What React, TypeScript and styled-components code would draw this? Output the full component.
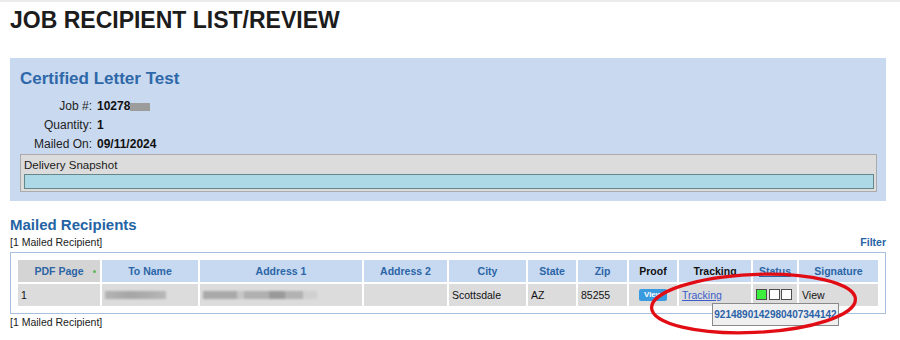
import React from 'react'
import styled, { createGlobalStyle } from 'styled-components'

const GlobalStyle = createGlobalStyle`
  html, body {
    margin: 0;
    padding: 0;
    background: #fff;
  }
  body {
    font-family: "Liberation Sans", Arial, Helvetica, sans-serif;
    color: #111;
  }
`

// page frame
const Page = styled.div`
  position: relative;
  width: 900px;
  height: 340px;
  overflow: hidden;
  box-sizing: border-box;
  border-top: 2px solid #ebebeb;
  padding: 4px 14px 0 10px;
`

const Title = styled.h1`
  margin: 0 0 24px;
  font-size: 23px;
  line-height: 28px;
  font-weight: bold;
  color: #1c1c1c;
`

// job summary panel
const Panel = styled.section`
  background: #c9d9ef;
  padding: 11px 9px 9px 10px;
`

const PanelTitle = styled.h2`
  margin: 0 0 8px;
  font-size: 17px;
  line-height: 20px;
  font-weight: bold;
  color: #2e68a9;
`

const InfoGrid = styled.div`
  display: grid;
  grid-template-columns: 72px auto;
  grid-auto-rows: 17.5px;
  column-gap: 5px;
  row-gap: 1.5px;
  align-items: center;
  font-size: 12px;
`

const InfoLabel = styled.div`
  text-align: right;
  color: #222;
`

const InfoValue = styled.div`
  display: flex;
  align-items: center;
  font-weight: bold;
  color: #111;
`

const Redacted = styled.span<{ $w: number; $h: number }>`
  display: inline-block;
  width: ${p => p.$w}px;
  height: ${p => p.$h}px;
  background: #9c9c9c;
  margin-top: 3px;
  filter: blur(0.4px);
`

const SnapshotBox = styled.div`
  margin-top: 1px;
  border: 1px solid #ababab;
  background: #dcdcdc;
  padding: 2px 2px 2px 3px;
`

const SnapshotLabel = styled.div`
  font-size: 11.5px;
  line-height: 17px;
  color: #1a1a1a;
`

const SnapshotBar = styled.div`
  height: 13px;
  border: 1px solid #66878a;
  background: #add8e6;
`

// recipients section
const SectionTitle = styled.h2`
  margin: 15px 0 0;
  font-size: 15px;
  line-height: 18px;
  font-weight: bold;
  color: #2463a4;
`

const CountRow = styled.div`
  display: flex;
  justify-content: space-between;
  align-items: baseline;
  margin-top: 2px;
  font-size: 10.5px;
  line-height: 13px;
  color: #1a1a1a;
`

const FilterLink = styled.span`
  font-weight: bold;
  color: #2463a4;
  font-size: 10.5px;
`

const TableBox = styled.div`
  margin-top: 3px;
  border: 1px solid #a9bfde;
  padding: 5px;
`

const Table = styled.table`
  width: 100%;
  table-layout: fixed;
  border-collapse: separate;
  border-spacing: 2px;
  font-size: 10.5px;
`

const Col = styled.col<{ $w: number }>`
  width: ${p => p.$w}px;
`

const HeadCell = styled.th<{ $tone?: 'gray'; $color?: 'dark' | 'link' }>`
  position: relative;
  height: 22px;
  padding: 0 3px;
  background: ${p => (p.$tone === 'gray' ? '#d4d4d4' : '#c6d9f1')};
  color: ${p => (p.$color === 'dark' ? '#111' : '#2c65a6')};
  text-decoration: ${p => (p.$color === 'link' ? 'underline' : 'none')};
  font-weight: bold;
  text-align: center;
  white-space: nowrap;
`

const SortDot = styled.span`
  position: absolute;
  right: 4px;
  top: 10px;
  width: 3px;
  height: 3px;
  border-radius: 50%;
  background: #62b85a;
`

const Cell = styled.td`
  position: relative;
  height: 22px;
  padding: 0 3px;
  background: #dcdcdc;
  color: #111;
  white-space: nowrap;
`

const Blur = styled.div<{ $w: number; $bg: string }>`
  width: ${p => p.$w}px;
  height: 8px;
  background: ${p => p.$bg};
  filter: blur(1.2px);
`

const ViewButton = styled.span`
  display: block;
  margin: 0 auto;
  width: 28px;
  height: 12px;
  border-radius: 2px;
  background: #3a9ae0;
  color: #fff;
  font-size: 8px;
  font-weight: bold;
  line-height: 12px;
  text-align: center;
`

const TrackingLink = styled.a`
  color: #3b5cc9;
  text-decoration: underline;
`

const StatusBoxes = styled.div`
  display: flex;
  gap: 1.5px;
`

const StatusBox = styled.span<{ $on?: boolean }>`
  width: 9px;
  height: 9px;
  border: 1px solid #4d4d4d;
  background: ${p => (p.$on ? '#3ef03e' : '#fff')};
`

const Tooltip = styled.div`
  position: absolute;
  left: 33px;
  top: 19px;
  z-index: 2;
  box-sizing: border-box;
  width: 127px;
  height: 23px;
  display: flex;
  align-items: center;
  justify-content: center;
  background: #efefef;
  border: 1px solid #8a8a8a;
  color: #2a62a8;
  font-size: 10px;
  font-weight: bold;
`

const Annotation = styled.svg`
  position: absolute;
  left: 640px;
  top: 262px;
  z-index: 3;
  pointer-events: none;
`

const App = () => {
  return (
    <Page>
      <GlobalStyle />
      <Title>JOB RECIPIENT LIST/REVIEW</Title>

      <Panel>
        <PanelTitle>Certified Letter Test</PanelTitle>
        <InfoGrid>
          <InfoLabel>Job #:</InfoLabel>
          <InfoValue>
            10278
            <Redacted $w={20} $h={8} />
          </InfoValue>
          <InfoLabel>Quantity:</InfoLabel>
          <InfoValue>1</InfoValue>
          <InfoLabel>Mailed On:</InfoLabel>
          <InfoValue>09/11/2024</InfoValue>
        </InfoGrid>
        <SnapshotBox>
          <SnapshotLabel>Delivery Snapshot</SnapshotLabel>
          <SnapshotBar />
        </SnapshotBox>
      </Panel>

      <SectionTitle>Mailed Recipients</SectionTitle>
      <CountRow>
        <span>[1 Mailed Recipient]</span>
        <FilterLink>Filter</FilterLink>
      </CountRow>

      <TableBox>
        <Table>
          <colgroup>
            <Col $w={82} />
            <Col $w={96} />
            <Col $w={162} />
            <Col $w={83} />
            <Col $w={77} />
            <Col $w={48} />
            <Col $w={49} />
            <Col $w={48} />
            <Col $w={72} />
            <Col $w={44} />
            <Col $w={79} />
          </colgroup>
          <thead>
            <tr>
              <HeadCell $tone="gray">
                PDF Page
                <SortDot />
              </HeadCell>
              <HeadCell>To Name</HeadCell>
              <HeadCell>Address 1</HeadCell>
              <HeadCell>Address 2</HeadCell>
              <HeadCell>City</HeadCell>
              <HeadCell>State</HeadCell>
              <HeadCell>Zip</HeadCell>
              <HeadCell $color="dark">Proof</HeadCell>
              <HeadCell $color="dark">Tracking</HeadCell>
              <HeadCell $color="link">Status</HeadCell>
              <HeadCell>Signature</HeadCell>
            </tr>
          </thead>
          <tbody>
            <tr>
              <Cell>1</Cell>
              <Cell>
                <Blur $w={61} $bg="linear-gradient(90deg, #b4b4b4, #a6a6a6 40%, #adadad 70%, #b8b8b8)" />
              </Cell>
              <Cell>
                <Blur
                  $w={114}
                  $bg="linear-gradient(90deg, #a9a9a9 0 30%, #c6c6c6 30% 36%, #b0b0b0 36% 58%, #9a9a9a 58% 72%, #b2b2b2 72% 88%, #d0d0d0 88%)"
                />
              </Cell>
              <Cell />
              <Cell>Scottsdale</Cell>
              <Cell>AZ</Cell>
              <Cell>85255</Cell>
              <Cell>
                <ViewButton>View</ViewButton>
              </Cell>
              <Cell>
                <TrackingLink>Tracking</TrackingLink>
                <Tooltip>9214890142980407344142</Tooltip>
              </Cell>
              <Cell>
                <StatusBoxes>
                  <StatusBox $on />
                  <StatusBox />
                  <StatusBox />
                </StatusBoxes>
              </Cell>
              <Cell>View</Cell>
            </tr>
          </tbody>
        </Table>
      </TableBox>

      <CountRow>
        <span>[1 Mailed Recipient]</span>
      </CountRow>

      <Annotation width="230" height="80" viewBox="0 0 230 80">
        <ellipse
          cx="113.5"
          cy="39.5"
          rx="102"
          ry="29"
          transform="rotate(-2.5 113.5 39.5)"
          fill="none"
          stroke="#e20d14"
          strokeWidth="3.3"
        />
      </Annotation>
    </Page>
  )
}

export default App
